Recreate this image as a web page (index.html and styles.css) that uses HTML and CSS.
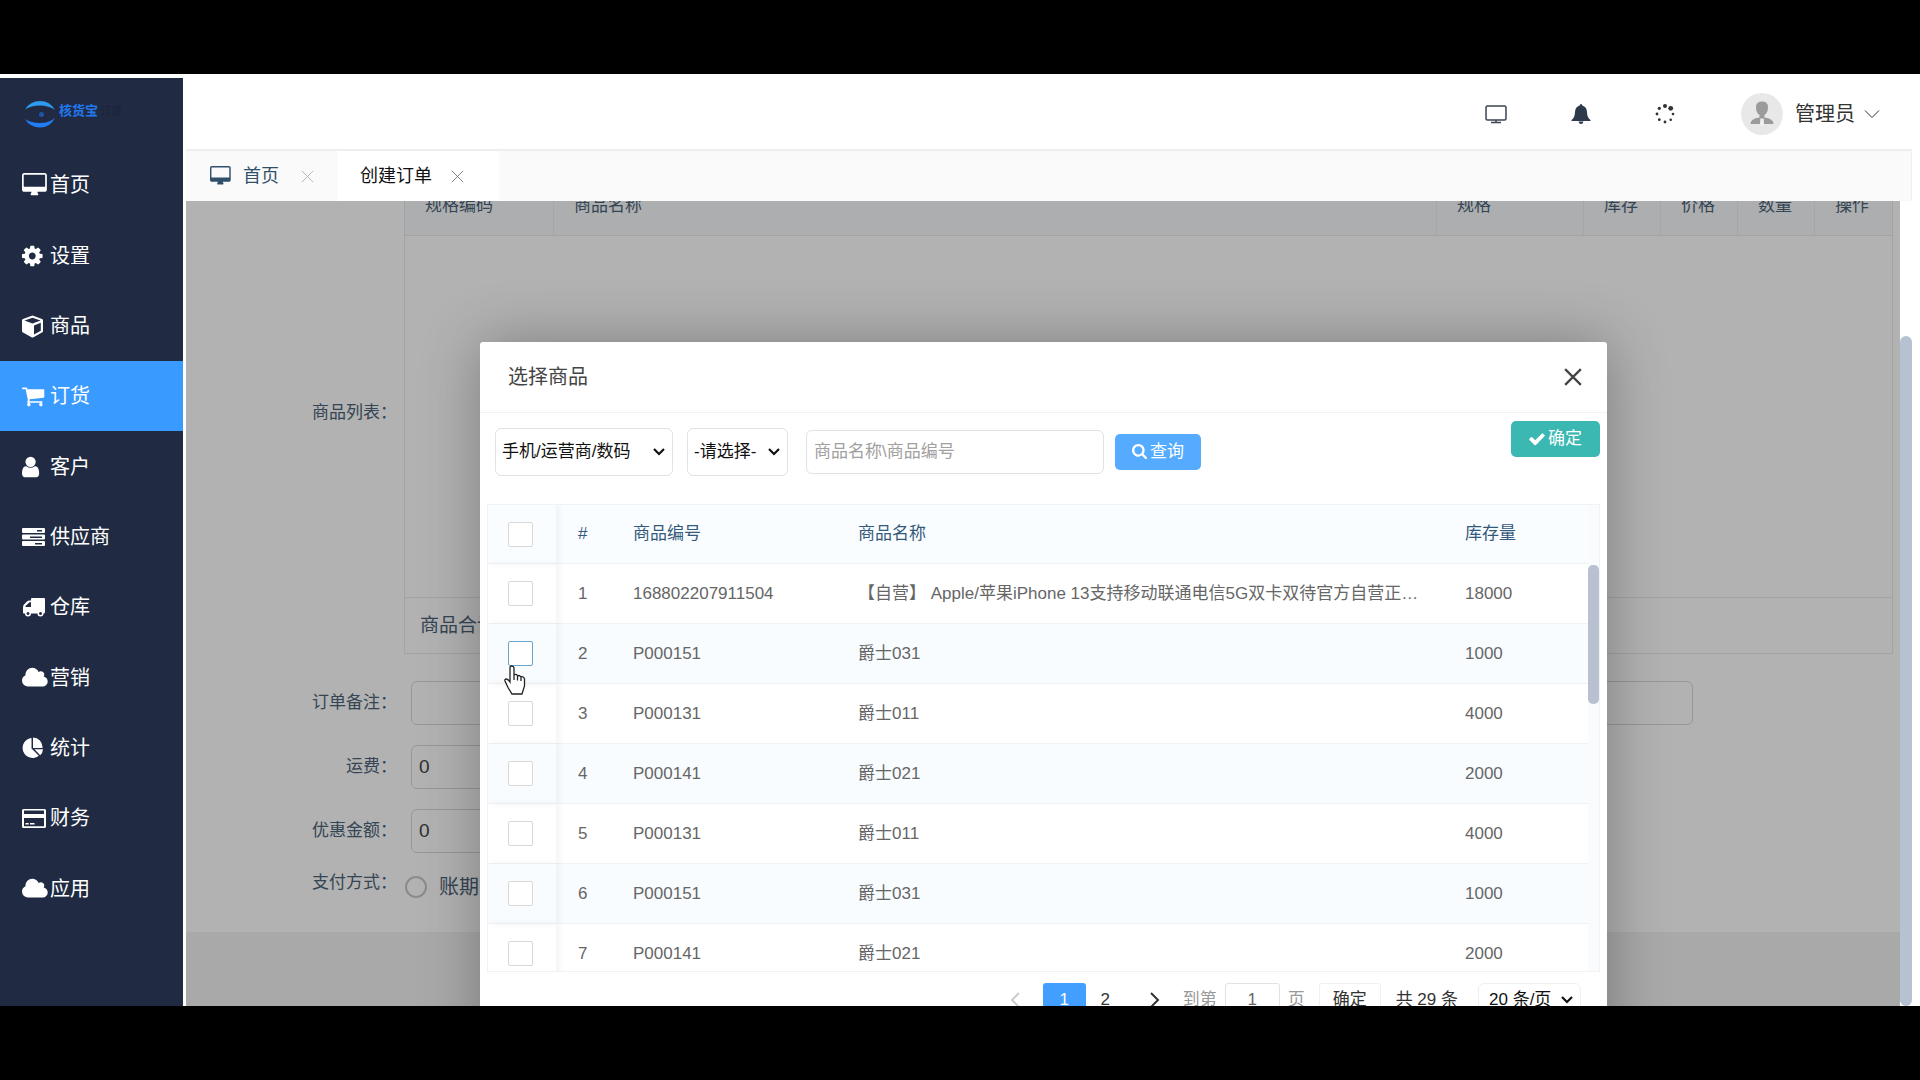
FILE: index.html
```html
<!DOCTYPE html>
<html lang="zh-CN">
<head>
<meta charset="utf-8">
<meta name="viewport" content="width=device-width, initial-scale=1">
<title>核货宝 - 创建订单</title>
<link rel="stylesheet" href="styles.css">
</head>
<body>
<svg class="sprite" aria-hidden="true">
  <symbol id="i-desktop" preserveAspectRatio="xMinYMid meet" viewBox="0 0 1856 1792"><path d="M1728 992v-832q0-13-9.500-22.500t-22.500-9.500h-1536q-13 0-22.500 9.500t-9.500 22.500v832q0 13 9.500 22.500t22.500 9.500h1536q13 0 22.500-9.500t9.500-22.500zm128-832v1088q0 66-47 113t-113 47h-544q0 37 16 77.500t32 71 16 43.500q0 26-19 45t-45 19h-448q-26 0-45-19t-19-45q0-14 16-44t32-70 16-78h-544q-66 0-113-47t-47-113v-1088q0-66 47-113t113-47h1536q66 0 113 47t47 113z"/></symbol>
  <symbol id="i-cog" preserveAspectRatio="xMinYMid meet" viewBox="128 0 1536 1792"><path d="M1152 896q0-106-75-181t-181-75-181 75-75 181 75 181 181 75 181-75 75-181zm512-109v222q0 12-8 23t-20 13l-185 28q-19 54-39 91 35 50 107 138 10 12 10 25t-9 23q-27 37-99 108t-94 71q-12 0-26-9l-138-108q-44 23-91 38-16 136-29 186-7 28-36 28h-222q-14 0-24.500-8.500t-11.500-21.500l-28-184q-49-16-90-37l-141 107q-10 9-25 9-14 0-25-11-126-114-165-168-7-10-7-23 0-12 8-23 15-21 51-66.500t54-70.500q-27-50-41-99l-183-27q-13-2-21-12.500t-8-23.500v-222q0-12 8-23t19-13l186-28q14-46 39-92-40-57-107-138-10-12-10-24 0-10 9-23 26-36 98.500-107.500t94.500-71.500q13 0 26 10l138 107q44-23 91-38 16-136 29-186 7-28 36-28h222q14 0 24.500 8.500t11.500 21.500l28 184q49 16 90 37l142-107q9-9 24-9 13 0 25 10 129 119 165 170 7 8 7 22 0 12-8 23-15 21-51 66.500t-54 70.500q26 50 41 98l183 28q13 2 21 12.500t8 23.500z"/></symbol>
  <symbol id="i-cube" preserveAspectRatio="xMinYMid meet" viewBox="0 0 21 24"><path fill-rule="evenodd" d="M10.500 1.500 20 5q1 .4 1 1.500V17q0 1-1 1.600l-8.500 4.700q-1 .5-2 0L1 18.600Q0 18 0 17V6.500Q0 5.400 1 5ZM2.500 6.600l8 3 8-3-8-2.900ZM12 20.400l6.800-3.700V8.800L12 11.400Z"/></symbol>
  <symbol id="i-cart" preserveAspectRatio="xMinYMid meet" viewBox="64 0 1664 1792"><path d="M704 1536q0 52-38 90t-90 38-90-38-38-90 38-90 90-38 90 38 38 90zm896 0q0 52-38 90t-90 38-90-38-38-90 38-90 90-38 90 38 38 90zm128-1088v512q0 24-16.500 42.500t-40.500 21.500l-1044 122q13 60 13 70 0 16-24 64h920q26 0 45 19t19 45-19 45-45 19h-1024q-26 0-45-19t-19-45q0-11 8-31.500t16-36 21.500-40 15.500-29.500l-177-823h-204q-26 0-45-19t-19-45 19-45 45-19h256q16 0 28.500 6.500t19.500 15.500 13 24.500 8 26 5.500 29.500 4.500 26h1201q26 0 45 19t19 45z"/></symbol>
  <symbol id="i-user" preserveAspectRatio="xMinYMid meet" viewBox="256 0 1280 1792"><path d="M1536 1399q0 109-62.500 187t-150.500 78h-854q-88 0-150.500-78t-62.500-187q0-85 8.500-160.500t31.500-152 58.500-131 94-89 134.500-34.500q131 128 313 128t313-128q76 0 134.500 34.500t94 89 58.500 131 31.500 152 8.500 160.500zm-256-887q0 159-112.500 271.500t-271.500 112.500-271.500-112.500-112.500-271.500 112.500-271.500 271.500-112.500 271.500 112.500 112.500 271.500z"/></symbol>
  <symbol id="i-server" preserveAspectRatio="xMinYMid meet" viewBox="0 0 23 24"><path fill-rule="evenodd" d="M1 3h21q1 0 1 1v3q0 1-1 1H1Q0 8 0 7V4q0-1 1-1Zm14 2v1.500h5V5ZM1 9.500h21q1 0 1 1v3q0 1-1 1H1q-1 0-1-1v-3q0-1 1-1Zm7 2V13h12v-1.500ZM1 16h21q1 0 1 1v3q0 1-1 1H1q-1 0-1-1v-3q0-1 1-1Zm12 2v1.500h7V18Z"/></symbol>
  <symbol id="i-truck" preserveAspectRatio="xMinYMid meet" viewBox="0 0 23 24"><path fill-rule="evenodd" d="M10 3h12q1 0 1 1v13q0 1.500-1.500 1.500a3 3 0 0 1-6 0H9a3 3 0 0 1-6 0H2q-1 0-1-1v-5q0-2 1-3l3-3q1-1 2.500-1H9V4q0-1 1-1ZM9 7.200H7.500L3.500 11v1H9ZM6 17a1.500 1.500 0 1 0 .01 0ZM18.500 17a1.500 1.500 0 1 0 .01 0Z"/></symbol>
  <symbol id="i-cloud" preserveAspectRatio="xMinYMid meet" viewBox="0 0 1920 1792"><path d="M1920 1152q0 159-112.500 271.500t-271.500 112.500h-1088q-185 0-316.500-131.500t-131.500-316.500q0-132 71-241.500t187-163.500q-2-28-2-43 0-212 150-362t362-150q158 0 286.500 88t187.500 230q70-62 166-62 106 0 181 75t75 181q0 75-41 138 129 30 213 134.500t84 239.500z"/></symbol>
  <symbol id="i-pie" preserveAspectRatio="xMinYMid meet" viewBox="0 0 21 24"><path d="M9.500 2v10.500l7.300 7.300A10 10 0 1 1 9.500 2ZM11 1.500q8.500.5 9.500 9.500v1H11ZM12.500 13.200H21q-.2 3.500-2.800 6Z"/></symbol>
  <symbol id="i-card" preserveAspectRatio="xMinYMid meet" viewBox="0 0 24 24"><path fill-rule="evenodd" d="M1.500 3h21Q24 3 24 4.500v16q0 1.500-1.500 1.500h-21Q0 22 0 20.500v-16Q0 3 1.500 3ZM2 4.500V8h20V4.500ZM2 12v8.300h20V12ZM3.500 17h3.200v1.600H3.500ZM8 17h4.500v1.600H8Z"/></symbol>
  <symbol id="i-check" viewBox="121 0 1550 1792"><path d="M1671 566q0 40-28 68l-724 724-136 136q-28 28-68 28t-68-28l-136-136-362-362q-28-28-28-68t28-68l136-136q28-28 68-28t68 28l294 295 656-657q28-28 68-28t68 28l136 136q28 28 28 68z"/></symbol>
  <symbol id="i-search" viewBox="64 128 1664 1664"><path d="M1216 832q0-185-131.500-316.500t-316.500-131.500-316.500 131.500-131.500 316.500 131.500 316.500 316.500 131.500 316.500-131.500 131.500-316.500zm512 832q0 52-38 90t-90 38q-54 0-90-38l-343-342q-179 124-399 124-143 0-273.500-55.500t-225-150-150-225-55.500-273.500 55.500-273.500 150-225 225-150 273.500-55.500 273.500 55.500 225 150 150 225 55.500 273.500q0 220-124 399l343 343q37 37 37 90z"/></symbol>
  <symbol id="i-close" viewBox="0 0 16 16"><path d="m1 1 14 14M15 1 1 15" fill="none" stroke="currentColor"/></symbol>
  <symbol id="i-down" viewBox="0 0 16 10"><path d="m1 1.500 7 7 7-7" fill="none" stroke="currentColor"/></symbol>
</svg>

<div class="app">
  <aside class="side">
    <a class="logo" href="#" aria-label="核货宝订货">
      <svg width="30" height="28" viewBox="0 0 30 28"><path d="M0 9.500Q5 1 15 1t15 9Q24 5.500 15 5.500T0 9.500Z" fill="#2f9bf0"/><path d="M0 19q6 4 15 4t15-5q-5 9.500-15 9.500T0 19Z" fill="#1f7cf2"/><circle cx="16.500" cy="14.500" r="2.500" fill="#1f55a8"/></svg>
      <span class="logo-name">核货宝</span><span class="logo-sub">订货</span>
    </a>
    <nav class="menu">
      <a href="#"><svg><use href="#i-desktop"/></svg>首页</a>
      <a href="#"><svg><use href="#i-cog"/></svg>设置</a>
      <a href="#"><svg><use href="#i-cube"/></svg>商品</a>
      <a href="#" class="on"><svg><use href="#i-cart"/></svg>订货</a>
      <a href="#"><svg><use href="#i-user"/></svg>客户</a>
      <a href="#"><svg><use href="#i-server"/></svg>供应商</a>
      <a href="#"><svg><use href="#i-truck"/></svg>仓库</a>
      <a href="#"><svg><use href="#i-cloud"/></svg>营销</a>
      <a href="#"><svg><use href="#i-pie"/></svg>统计</a>
      <a href="#"><svg><use href="#i-card"/></svg>财务</a>
      <a href="#"><svg><use href="#i-cloud"/></svg>应用</a>
    </nav>
  </aside>

  <div class="main">
    <header class="top">
      <button class="tool" type="button" aria-label="桌面"><svg width="22" height="20" viewBox="0 0 22 20"><path d="M2.500 2h17Q21 2 21 3.500v11q0 1.500-1.500 1.500h-17Q1 16 1 14.500v-11Q1 2 2.500 2ZM11 16v2.500M6 18.500h10" fill="none" stroke="#3c4450" stroke-width="1.500"/></svg></button>
      <button class="tool bell" type="button" aria-label="消息"><svg width="20" height="20" viewBox="0 0 20 20"><path d="M10 0q1.200 0 1.300 1.600Q15.800 3 16 8q.2 6 3.500 8v1H.5v-1Q3.800 14 4 8q.2-5 4.700-6.400Q8.800 0 10 0ZM7.500 17.500h5Q12 20 10 20t-2.500-2.500Z"/></svg></button>
      <button class="tool" type="button" aria-label="刷新"><svg width="20" height="20" viewBox="0 0 20 20"><circle cx="10" cy="2" r="2"/><circle cx="15.700" cy="4.300" r="2.400"/><circle cx="18" cy="10" r="1.300"/><circle cx="15.700" cy="15.700" r="1.300"/><circle cx="10" cy="18" r="1.400"/><circle cx="4.300" cy="15.700" r="1.400"/><circle cx="2" cy="10" r="1.400"/><circle cx="4.300" cy="4.300" r="1.600"/></svg></button>
      <button class="account" type="button">
        <svg width="42" height="42" viewBox="0 0 42 42"><circle cx="21" cy="21" r="21" fill="#e8e8e8"/><path d="M21 8.500q6 0 6 5.500 0 6-3.500 8v2.500q9 1 9 6.500h-23q0-5.500 9-6.500V22Q15 20 15 14q0-5.500 6-5.500Z" fill="#9b9b9b"/><path d="m19.500 25 1.500 1 1.500-1 .5 6-2 2-2-2Z" fill="#f2f2f2"/></svg>
        <span>管理员</span>
        <svg width="16" height="10" class="thin"><use href="#i-down"/></svg>
      </button>
    </header>

    <div class="tabs">
      <div class="tab"><svg class="tab-ico"><use href="#i-desktop"/></svg><a href="#">首页</a><button type="button" aria-label="关闭首页"><svg width="13" height="13"><use href="#i-close"/></svg></button></div>
      <div class="tab current"><a href="#">创建订单</a><button type="button" aria-label="关闭创建订单"><svg width="13" height="13"><use href="#i-close"/></svg></button></div>
    </div>

    <div class="stage">
      <div class="view">
        <form class="order">
          <div class="line">
            <span class="label">商品列表：</span>
            <div class="goods">
              <table>
                <colgroup><col class="g-code"><col><col class="g-spec"><col class="g-num"><col class="g-num"><col class="g-num"><col class="g-num"></colgroup>
                <thead><tr><th>规格编码</th><th>商品名称</th><th>规格</th><th>库存</th><th>价格</th><th>数量</th><th>操作</th></tr></thead>
              </table>
              <div class="total">商品合计：</div>
            </div>
          </div>
          <div class="line field wide"><label class="label" for="note">订单备注：</label><input id="note" type="text"></div>
          <div class="line field"><label class="label" for="freight">运费：</label><input id="freight" type="text" value="0"></div>
          <div class="line field"><label class="label" for="discount">优惠金额：</label><input id="discount" type="text" value="0"></div>
          <div class="line pay"><span class="label">支付方式：</span><label class="choice"><input type="radio" name="pay">账期</label></div>
        </form>
        <div class="mask"></div>

        <section class="modal" role="dialog" aria-labelledby="dlg-title">
          <div class="modal-head"><h2 id="dlg-title">选择商品</h2><button type="button" aria-label="关闭"><svg width="18" height="18"><use href="#i-close"/></svg></button></div>
          <div class="filters">
            <select class="pick cat" aria-label="分类"><option>手机/运营商/数码</option></select>
            <select class="pick sub" aria-label="子分类"><option>-请选择-</option></select>
            <input class="query" type="text" placeholder="商品名称\商品编号" aria-label="商品名称\商品编号">
            <button class="btn blue" type="button"><svg width="15" height="15"><use href="#i-search"/></svg>查询</button>
            <button class="btn green" type="button"><svg width="16" height="18"><use href="#i-check"/></svg>确定</button>
          </div>
          <div class="list">
            <table>
              <colgroup><col class="c-pick"><col class="c-no"><col class="c-code"><col><col class="c-stock"></colgroup>
              <thead><tr><th><input type="checkbox" aria-label="全选"></th><th>#</th><th>商品编号</th><th>商品名称</th><th>库存量</th></tr></thead>
              <tbody>
                <tr><td><input type="checkbox" aria-label="选择 1"></td><td>1</td><td>168802207911504</td><td>【自营】 Apple/苹果iPhone 13支持移动联通电信5G双卡双待官方自营正品手机</td><td>18000</td></tr>
                <tr><td><input class="hover" type="checkbox" aria-label="选择 2"><svg class="pointer" width="22" height="30" viewBox="0 0 22 30"><path d="M6 17V3q0-2 1.800-2T10 3v7q2-1.500 3.500.8 2-1 3.300 1 3-.8 3.700 2.200V21l-2.500 8H8L4 22.500 1 16q-.5-2 1.500-2Q4 14 6 17ZM10 10v5M13.500 11v4.500M17 12v4" fill="#fff" stroke="#222" stroke-width="1.300"/></svg></td><td>2</td><td>P000151</td><td>爵士031</td><td>1000</td></tr>
                <tr><td><input type="checkbox" aria-label="选择 3"></td><td>3</td><td>P000131</td><td>爵士011</td><td>4000</td></tr>
                <tr><td><input type="checkbox" aria-label="选择 4"></td><td>4</td><td>P000141</td><td>爵士021</td><td>2000</td></tr>
                <tr><td><input type="checkbox" aria-label="选择 5"></td><td>5</td><td>P000131</td><td>爵士011</td><td>4000</td></tr>
                <tr><td><input type="checkbox" aria-label="选择 6"></td><td>6</td><td>P000151</td><td>爵士031</td><td>1000</td></tr>
                <tr><td><input type="checkbox" aria-label="选择 7"></td><td>7</td><td>P000141</td><td>爵士021</td><td>2000</td></tr>
              </tbody>
            </table>
            <div class="gutter"><div class="thumb"></div></div>
          </div>
          <div class="pager">
            <button class="arrow dim" type="button" aria-label="上一页"><svg width="10" height="16" viewBox="0 0 10 16"><path d="M9 1 2 8l7 7"/></svg></button>
            <button class="page now" type="button">1</button>
            <button class="page" type="button">2</button>
            <button class="arrow" type="button" aria-label="下一页"><svg width="10" height="16" viewBox="0 0 10 16"><path d="m1 1 7 7-7 7"/></svg></button>
            <label class="jump">到第<input type="text" value="1">页</label>
            <button class="go" type="button">确定</button>
            <span class="count">共 29 条</span>
            <select class="pick size" aria-label="每页条数"><option>20 条/页</option></select>
          </div>
        </section>
      </div>
      <div class="scroll"><div class="scroll-thumb"></div></div>
    </div>
  </div>
</div>
</body>
</html>
```
FILE: styles.css
```css
* { box-sizing: border-box; }

body {
  margin: 0;
  height: 100vh;
  padding: 74px 0;
  background: #000;
  overflow: hidden;
  font: 17px/24px "Liberation Sans", "Noto Sans CJK SC", sans-serif;
  color: #666;
}

a { color: inherit; text-decoration: none; }
button, input, select { font: inherit; color: inherit; margin: 0; padding: 0; }
button { border: 0; background: none; display: flex; align-items: center; justify-content: center; }
svg { fill: currentColor; flex: none; }
table { width: 100%; border-collapse: separate; border-spacing: 0; table-layout: fixed; }
th { font-weight: 400; text-align: left; }

.sprite { position: absolute; width: 0; height: 0; }

.app { display: flex; height: 100%; background: #fff; overflow: hidden; }

/* Sidebar */
.side {
  width: 183px;
  flex: none;
  margin-top: 4px;
  display: flex;
  flex-direction: column;
  background: #202b43;
  color: #fff;
}
.logo { height: 72px; flex: none; padding: 0 0 0 25px; display: flex; align-items: center; }
.logo-name { margin: 0 2px 6px 4px; font-size: 13px; font-weight: 700; color: #2277ee; }
.logo-sub { margin-bottom: 6px; font-size: 11px; color: #19213a; }
.menu { flex: 1; display: flex; flex-direction: column; padding-bottom: 82px; font-size: 20px; }
.menu a { flex: 1; display: flex; align-items: center; padding-left: 22px; }
.menu svg { width: 28px; height: 24px; }
.menu .on { background: #399bff; }

/* Header */
.main { flex: 1; min-width: 0; margin-left: 3px; margin-right: 8px; display: flex; flex-direction: column; }
.top {
  height: 77px;
  flex: none;
  display: flex;
  align-items: center;
  justify-content: flex-end;
  gap: 64px;
  padding: 4px 32px 0 0;
  border-bottom: 2px solid #eee;
  color: #333;
}
.bell { color: #2c3a4c; }
.account { gap: 12px; padding-left: 2px; font-size: 20px; }
.account .thin { margin-left: -3px; }

.tabs { height: 50px; flex: none; display: flex; background: #fafafa; font-size: 18px; border-right: 1px solid #eee; }
.tab { display: flex; align-items: center; padding: 0 24px; color: #2f4f6b; }
.tab-ico { width: 22px; height: 20px; margin-right: 11px; }
.tab button { margin-left: 22px; color: #aaa; }
.tab.current { background: #fff; color: #111; padding: 0 35px 0 22px; }
.tab.current button { margin-left: 19px; color: #666; }

/* Page behind the dialog */
.stage { flex: 1; min-height: 0; display: flex; }
.view { flex: 1; min-width: 0; position: relative; overflow: hidden; background: #f2f2f2; }
.scroll { width: 12px; padding-top: 135px; display: flex; background: #fff; }
.scroll-thumb { flex: 1; border-radius: 6px; background: #b6c2d2; }

.order { margin-top: -26px; padding: 0 7px 31px 0; background: #fff; color: #4c6478; }
.line { display: flex; align-items: center; }
.label { width: 218px; flex: none; padding-right: 7px; text-align: right; }
.goods { flex: 1; height: 479px; display: flex; flex-direction: column; justify-content: space-between; border: 1px solid #eaeaea; margin-bottom: 27px; }
.goods th { height: 60px; padding: 0 20px; background: #f8fafc; border-right: 1px solid #eceef0; border-bottom: 1px solid #eaeaea; }
.goods th:last-child { border-right: 0; }
.g-code { width: 149px; }
.g-spec { width: 147px; }
.g-num { width: 77px; }
.total { height: 56px; padding: 0 15px; line-height: 56px; font-size: 19px; border-top: 1px solid #eaeaea; }
.line:first-child .label { padding-bottom: 30px; }
.field { margin-bottom: 20px; }
.field input { width: 300px; height: 44px; margin-left: 7px; padding: 0 7px; border: 1px solid #d8d8d8; border-radius: 6px; background: #fff; font-size: 19px; color: #444; }
.field.wide input { flex: 1; margin-right: 200px; }
.pay { height: 28px; }
.pay .label { padding-bottom: 8px; }
.choice { display: flex; align-items: center; gap: 12px; font-size: 20px; }
.choice input { appearance: none; width: 22px; height: 22px; margin-left: 1px; border: 2px solid #c8c8c8; border-radius: 50%; }

.mask { position: absolute; inset: 0; background: rgba(0, 0, 0, .3); }

/* Dialog */
.modal {
  position: absolute;
  top: 141px;
  left: 294px;
  right: 293px;
  height: 760px;
  border-radius: 3px;
  background: #fff;
  box-shadow: 1px 1px 60px rgba(0, 0, 0, .3);
}
.modal-head { height: 71px; padding: 0 25px 0 28px; display: flex; align-items: center; justify-content: space-between; border-bottom: 1px solid #f2f2f2; color: #444; }
.modal-head h2 { margin: 0; font-size: 20px; font-weight: 400; }
.modal-head svg { stroke-width: 2; }

.filters { display: flex; align-items: center; padding: 8px 7px 0 15px; height: 69px; }
.pick {
  appearance: none;
  height: 48px;
  padding: 0 6px;
  border: 1px solid #e2e2e2;
  border-radius: 6px;
  color: #111;
  background: #fff url("data:image/svg+xml,%3Csvg xmlns='http://www.w3.org/2000/svg' width='14' height='10' viewBox='0 0 14 10'%3E%3Cpath d='m2 2 5 5 5-5' fill='none' stroke='%23111' stroke-width='2.200'/%3E%3C/svg%3E") no-repeat right 6px center;
}
.cat { width: 178px; }
.sub { width: 101px; margin-left: 14px; }
.query { width: 298px; height: 44px; margin-left: 18px; padding: 0 7px; border: 1px solid #e2e2e2; border-radius: 6px; }
.query::placeholder { color: #a0a0a0; opacity: 1; }
.btn { height: 36px; gap: 3px; border-radius: 5px; color: #fff; }
.blue { width: 86px; margin-left: 11px; background: #54abff; }
.green { width: 89px; margin-left: auto; align-self: flex-start; background: #3cb8b2; }

.list { margin: 22px 7px 0; height: 468px; overflow: hidden; display: flex; border: 1px solid #f0f2f4; }
.list table { flex: 1; }
.list th, .list td { height: 60px; padding: 0 22px; border-bottom: 1px solid #f0f2f4; white-space: nowrap; overflow: hidden; text-overflow: ellipsis; }
.list th { height: 59px; background: #f9fdff; color: #35597a; }
.list tr:nth-child(even) td { background: #f8fcff; }
.list th:first-child, .list td:first-child { position: relative; overflow: visible; padding: 0 20px; box-shadow: 3px 0 8px rgba(0, 0, 0, .05); }
.list input { appearance: none; display: block; width: 25px; height: 25px; border: 1px solid #d8d8d8; border-radius: 2px; background: #fff; }
.list input.hover { border-color: #6aa5cf; }
.pointer { position: absolute; left: 16px; top: 41px; z-index: 2; }
.c-pick { width: 68px; }
.c-no { width: 55px; }
.c-code { width: 225px; }
.c-stock { width: 145px; }
.gutter { width: 11px; flex: none; padding-top: 60px; background: #fafbfc; }
.thumb { height: 139px; border-radius: 5px; background: #b9c0d0; }

.pager { display: flex; align-items: center; padding: 11px 26px 0 0; justify-content: flex-end; color: #333; }
.arrow { width: 56px; height: 34px; }
.arrow path { fill: none; stroke: currentColor; stroke-width: 2; }
.dim { color: #ccc; }
.page { width: 43px; height: 34px; }
.page.now { border-radius: 3px; background: #429eff; color: #fff; margin-right: -2px; }
.jump { display: flex; align-items: center; color: #999; gap: 8px; }
.jump input { width: 55px; height: 34px; border: 1px solid #e2e2e2; border-radius: 3px; text-align: center; color: #666; }
.go { width: 62px; height: 34px; margin-left: 14px; border: 1px solid #f0f0f0; border-radius: 3px; }
.count { margin: 0 20px 0 15px; }
.size { width: 103px; height: 34px; padding: 0 10px; border-color: #f0f0f0; }
```
